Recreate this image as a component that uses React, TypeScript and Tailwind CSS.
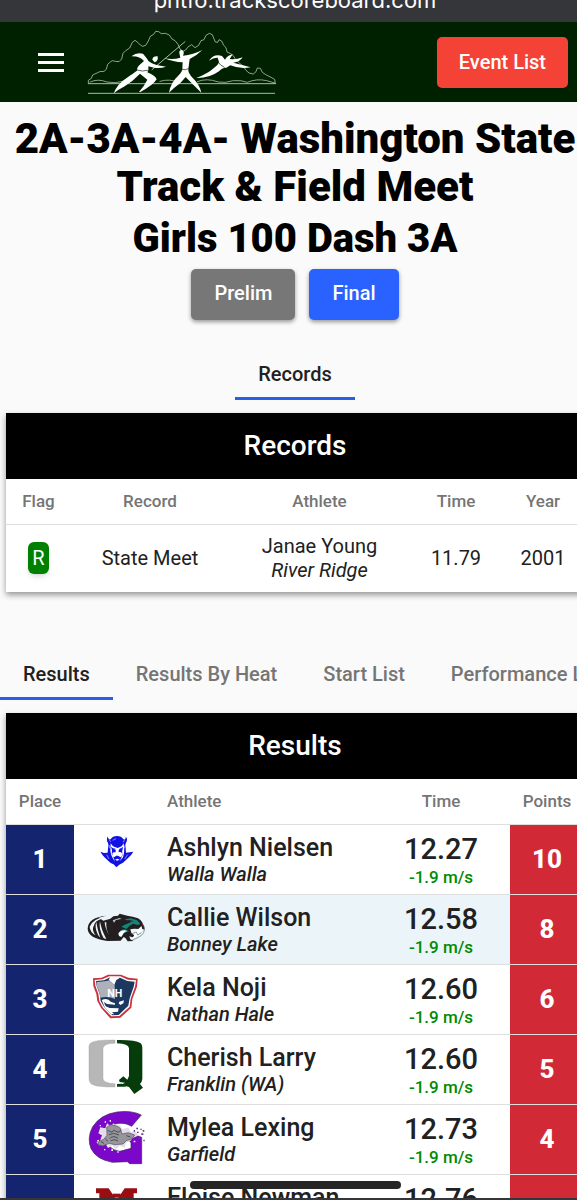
import type { ReactNode } from "react";

function MeetLogo() {
  return (
    <svg viewBox="261 84 570 198" className="h-[66px] w-[190px]" role="img" aria-label="Meet logo" fill="none" strokeLinejoin="round" strokeLinecap="round">
      <g stroke="#c3d2bd" strokeWidth="2.2">
        <path d="M265 246 L265 238 L274 232 L278 222 L291 216 L299 212 L312 211 L319 205 L323 190 L331 183 L337 179 L346 181 L357 182 L365 174 L369 157 L377 149 L389 141 L397 124 L405 118 L413 124 L421 132 L428 136 L437 133 L445 120 L451 106 L461 100 L467 91 L476 92 L484 98 L496 97 L508 102 L516 114 L525 119 L534 130 L540 144 L549 151 L557 147 L565 137 L575 131 L585 140 L596 133 L603 119 L612 116 L618 103 L628 97 L637 101 L641 111 L646 123 L653 124 L657 116 L665 120 L671 133 L678 140 L681 153 L692 158 L700 164 L707 176 L719 187 L730 196 L738 208 L747 216 L760 219 L768 212 L772 201 L781 202 L787 214 L799 222 L813 229 L824 235 L826 248" />
        <path d="M265 248 H826 M265 277 H824" strokeWidth="2.6" />
        <path d="M270 243 Q295 232 320 243 Q345 248 370 241 M480 241 Q508 232 535 244 M592 242 Q620 230 655 243 Q675 247 700 239 Q725 237 742 244 Q770 232 800 239 L824 246" />
        <path d="M555 122 L456 206" strokeWidth="2.6" />
      </g>
      <g fill="#fff">
        <path d="M394 166 Q410 153 429 158 Q439 169 446 181 Q463 194 498 197 Q481 203 462 200 L445 196 Q447 207 442 214 Q467 225 470 235 Q460 252 421 273 L417 273 Q433 255 442 236 L420 218 Q399 240 374 256 Q353 267 341 277 Q352 248 381 230 Q401 216 411 209 Q410 199 421 190 L432 180 Q420 165 394 166Z" />
        <path d="M457 176 Q458 165 473 166 Q475 181 464 184Z" />
        <path d="M538 156 Q537 147 545 147 Q552 149 551 158 L549 164 Q580 161 607 147 Q590 164 569 174 L565 204 Q563 215 579 232 Q598 250 604 275 Q575 247 557 228 Q544 246 522 261 L507 275 Q512 245 536 223 Q547 211 547 203 L548 184 Q520 183 491 171 Q518 177 541 170Z" />
        <path d="M627 179 Q642 157 666 165 L675 176 Q683 163 698 160 L689 174 Q707 177 728 169 Q719 183 700 185 L752 199 Q720 205 691 193 L679 200 Q664 201 657 211 Q628 232 589 231 Q625 216 639 203 Q655 192 657 183 L653 170 Q641 169 627 179Z" />
      </g>
      <path stroke="#002100" strokeWidth="2" d="M411 207 Q427 213 443 208 M547 205 Q556 209 565 203 M655 184 Q661 194 673 199" />
    </svg>
  );
}

function DevilLogo() {
  return (
    <svg viewBox="21 3 180 180" className="size-[60px]" role="img" aria-label="Walla Walla">
      <path fill="#1111e2" d="M83 31 Q78 42 84 51 Q87 57 84 68 L83 80 L72 81 L61 77 Q67 88 75 95 L91 110 Q103 114 109 124 Q119 113 129 110 L145 95 Q154 88 160 77 L138 80 L137 67 Q134 56 138 50 Q144 41 138 32 Q137 41 130 40 Q124 30 111 30 Q98 30 92 40 Q83 39 83 31Z" />
      <path fill="#fff" d="M92 52 L91 74 Q93 92 105 106 L100 94 Q93 83 96 73 L93 62 L107 73 L107 79 Q99 77 97 82 Q96 91 102 94 L109 89 H114 L122 94 Q129 89 126 81 Q121 77 116 79 L116 73 L130 62 Q124 77 128 87 L119 106 L129 94 Q135 78 131 52 L125 61 L113 66 L99 61Z" />
      <path fill="#1111e2" d="M98 66 L106 68 L106 73Z M117 69 L126 65 L119 73Z" />
      <path fill="#fff" d="M105 101 L112 98 L119 101 L112 104Z" />
      <path stroke="#fff" strokeWidth="1.5" fill="none" d="M86 37 L92 48 M135 37 L130 49 M87 57 L89 67 M135 58 L133 67 M80 86 L87 99 M143 86 L134 99 M98 43 L108 38" />
    </svg>
  );
}

function PantherLogo() {
  return (
    <svg viewBox="21 213 180 180" className="size-[60px]" role="img" aria-label="Bonney Lake">
      <path fill="#231f20" d="M80 269 Q24 274 23 308 Q24 337 83 345 L122 344 L131 333 L136 336 L143 346 L161 345 L151 340 L148 331 Q157 336 166 331 L154 321 L151 310 L163 308 L175 309 L184 300 L187 309 L194 311 Q190 285 174 277 L158 272 L142 269 L119 263 L114 269 L100 271 L91 278 L70 284 L57 275Z" />
      <path fill="#edf4f8" d="M80 269 Q37 279 29 302 Q30 319 47 328 Q34 313 41 300 Q46 284 62 280Z M49 288 Q43 304 54 327 L61 335 Q51 306 49 288Z M60 286 Q55 308 71 337 L79 339 Q63 309 60 286Z M74 289 Q75 306 87 327 Q77 308 79 289Z" />
      <path fill="#168479" d="M134 280 L153 277 L171 283 L181 293 L174 297 L159 293 L148 300 L139 309 L124 302 L134 296 L153 289Z M120 313 L134 310 L147 315 L134 321Z" />
      <path fill="#fff" d="M115 322 Q123 310 141 314 L132 320 L124 333 L117 330Z M166 315 L185 304 L183 321 L165 333 L154 340 L162 329Z" />
      <path fill="#b9c4c6" d="M98 283 L118 276 L126 279 L108 282 L102 290Z" />
      <path fill="#231f20" d="M119 279 L134 285 L148 282 L162 286 L149 287 L132 294 L117 291Z" />
      <path stroke="#58696a" strokeWidth="2" fill="none" d="M192 300 Q198 323 175 334 L156 343 M157 323 L169 318 L173 327 L184 320" />
      <path stroke="#a33939" strokeWidth="2" d="M187 294 L190 300" />
    </svg>
  );
}

function RaiderLogo() {
  return (
    <svg viewBox="21 3 180 180" className="size-[60px]" role="img" aria-label="Nathan Hale">
      <path fill="#c9333c" d="M39 37 L65 35 L84 26 H123 L145 35 L173 38 L171 62 L157 99 L154 125 L121 155 L91 157 L64 127 L52 105 L49 84 L40 60Z" />
      <path fill="#fff" d="M44 42 L67 40 L88 31 H121 L144 41 L168 43 L165 62 L152 98 L149 122 L118 150 L94 151 L69 125 L58 105 L55 83 L46 59Z" />
      <path fill="#1c3760" d="M48 45 L72 43 L91 34 L86 41 L103 57 L108 43 L105 36 L120 35 L142 45 L164 47 L161 62 L149 97 L145 119 L116 147 L97 148 L73 124 L62 105 L59 84 L50 60Z" />
      <path fill="#aeb0ba" d="M50 48 L74 46 L90 43 L104 58 L105 99 Q87 90 61 95 L57 75 L50 60Z" />
      <path fill="#fff" d="M92 34 L105 33 L120 35 L108 43 L104 52 L91 44Z M65 102 Q83 94 92 107 L105 112 L105 116 L81 114 L71 108 L77 121 L89 126 L116 127 L114 137 L96 139 L103 145 L93 144 L74 124Z M118 107 L132 103 L130 112 L121 117 L116 112Z" />
      <text x="82" y="93" fill="#fff" className="font-['Roboto'] text-[32px] font-bold">NH</text>
    </svg>
  );
}

function QuakerLogo() {
  return (
    <svg viewBox="21 213 180 180" className="size-[60px]" role="img" aria-label="Franklin">
      <path fill="#b7b7b7" stroke="#9a9a9a" strokeWidth="1" d="M105 222 Q45 221 32 231 Q25 236 27 252 V333 Q26 353 40 357 Q56 363 105 363 V353 Q72 352 69 339 V246 Q72 232 105 232Z" />
      <path fill="#063c0b" d="M111 222 Q166 221 181 231 Q188 235 187 252 V338 Q186 348 180 354 L189 365 L163 384 L147 363 L124 356 L135 350 L119 348 L117 342 L130 331 L142 341 L147 330 V247 Q146 233 111 232Z" />
      <path fill="#063c0b" d="M111 354 L126 353 L140 362 H111Z" />
    </svg>
  );
}

function BulldogLogo() {
  return (
    <svg viewBox="21 18 180 180" className="size-[60px]" role="img" aria-label="Garfield">
      <path fill="#7b08c8" stroke="#3e225d" strokeWidth="2" d="M184 42 Q154 27 111 33 Q62 40 38 77 Q20 110 33 143 Q49 175 97 184 L142 182 L149 188 H185 V109 L155 98 L139 111 L153 125 V142 L119 151 Q81 145 77 108 Q79 80 105 69 Q133 62 155 76Z" />
      <path fill="#e4dce9" d="M61 79 L76 82 L81 67 L91 75 L101 67 L108 75 L120 72 L127 84 L145 80 L154 94 L168 91 L174 104 L158 111 L150 121 L138 126 L134 140 L119 134 L108 145 L97 134 L84 141 L77 129 L57 133 L49 123 L60 119 L66 103 L55 97Z" />
      <path fill="#96959c" stroke="#50505a" strokeWidth="2" d="M80 79 L92 71 L111 75 L121 82 L126 99 L145 95 L164 102 L155 114 L139 119 L129 129 L104 131 L88 127 L67 135 L55 131 L55 122 L71 115 L81 103Z" />
      <path stroke="#3e3e48" strokeWidth="2.5" fill="none" d="M83 88 L94 93 L103 88 L114 94 L123 88 M87 101 L101 97 L117 102 M89 112 Q101 102 114 112 M92 119 L104 116 L114 120 M63 122 L72 127 M139 104 L151 108 M76 114 L84 121" />
      <path fill="#fff" d="M74 61h4v4h-4z M59 72h4v4h-4z M89 57h4v5h-4z M128 74h4v4h-4z M52 117h5v4h-5z M72 144h4v4h-4z M94 145h5v5h-5z M112 151h4v4h-4z M127 143h5v4h-5z M146 134h4v4h-4z M161 119h5v5h-5z M179 100h4v4h-4z M61 96h4v4h-4z M81 132h4v4h-4z" />
      <path fill="#693387" d="M169 80h5v5h-5z M181 83h4v4h-4z M188 87h5v5h-5z M171 92h5v4h-5z M184 97h6v5h-6z M175 109h5v5h-5z M190 116h4v5h-4z M161 87h4v5h-4z" />
    </svg>
  );
}

function BlockMLogo() {
  return (
    <svg viewBox="21 228 180 180" className="size-[60px]" role="img" aria-label="School logo">
      <path fill="#980e12" d="M48 262 H86 L110 298 L134 262 H171 V277 H161 V338 H171 V354 H129 V338 H137 V292 L110 331 L83 292 V338 H91 V354 H48 V338 H58 V277 H48Z" />
      <path fill="#980e12" d="M98 278 H122 V290 H98Z" />
    </svg>
  );
}

type Result = {
  place: number;
  name: string;
  school: string;
  time: string;
  points: number;
  logo: ReactNode;
};

const results: Result[] = [
  { place: 1, name: "Ashlyn Nielsen", school: "Walla Walla", time: "12.27", points: 10, logo: <DevilLogo /> },
  { place: 2, name: "Callie Wilson", school: "Bonney Lake", time: "12.58", points: 8, logo: <PantherLogo /> },
  { place: 3, name: "Kela Noji", school: "Nathan Hale", time: "12.60", points: 6, logo: <RaiderLogo /> },
  { place: 4, name: "Cherish Larry", school: "Franklin (WA)", time: "12.60", points: 5, logo: <QuakerLogo /> },
  { place: 5, name: "Mylea Lexing", school: "Garfield", time: "12.73", points: 4, logo: <BulldogLogo /> },
  { place: 6, name: "Eloise Newman", school: "", time: "12.76", points: 3, logo: <BlockMLogo /> },
];

const tabs = ["Results", "Results By Heat", "Start List", "Performance List"];

function RecordsTable() {
  return (
    <section className="mx-[6px] bg-white shadow-[0_3px_6px_rgba(0,0,0,0.4)]">
      <h2 className="bg-black text-center text-[28px] leading-[66px] font-medium text-white">Records</h2>
      <table className="w-full table-fixed border-collapse text-center">
        <colgroup>
          <col className="w-[65px]" />
          <col className="w-[158px]" />
          <col />
          <col className="w-[92px]" />
          <col className="w-[82px]" />
        </colgroup>
        <thead>
          <tr className="h-[45px] border-b border-[#dedede] text-[17px] text-[#757575]">
            {["Flag", "Record", "Athlete", "Time", "Year"].map((label) => (
              <th key={label} className="font-medium">{label}</th>
            ))}
          </tr>
        </thead>
        <tbody>
          <tr className="h-[68px] text-[20px] leading-6 text-[#212121]">
            <td>
              <span className="inline-block rounded-[6px] bg-[#008000] px-1 leading-8 text-white shadow-md">R</span>
            </td>
            <td>State Meet</td>
            <td>
              Janae Young
              <br />
              <i>River Ridge</i>
            </td>
            <td>11.79</td>
            <td>2001</td>
          </tr>
        </tbody>
      </table>
    </section>
  );
}

function ResultsTable() {
  return (
    <section className="mx-[6px] bg-white shadow-[0_3px_6px_rgba(0,0,0,0.4)]">
      <h2 className="bg-black text-center text-[28px] leading-[66px] font-medium text-white">Results</h2>
      <table className="w-full table-fixed border-collapse">
        <colgroup>
          <col className="w-[68px]" />
          <col className="w-[86px]" />
          <col />
          <col className="w-[138px]" />
          <col className="w-[74px]" />
        </colgroup>
        <thead>
          <tr className="h-[45px] border-b border-[#dedede] text-[17px] text-[#757575]">
            <th className="font-medium">Place</th>
            <th aria-label="School logo" />
            <th className="pl-[7px] text-left font-medium">Athlete</th>
            <th className="font-medium">Time</th>
            <th className="font-medium">Points</th>
          </tr>
        </thead>
        <tbody>
          {results.map((r) => (
            <tr key={r.place} className="h-[70px] border-b border-[#dedede] text-[#212121] nth-2:bg-[#ebf4f8]">
              <td className="bg-[#14246f] text-center text-[26px] font-extrabold text-white">{r.place}</td>
              <td className="pt-[2px] pl-[13px] align-top">{r.logo}</td>
              <td className="pt-[9px] pl-[7px] align-top font-medium whitespace-nowrap">
                <div className="text-[25px] leading-7">{r.name}</div>
                <div className="text-[20px] leading-6 italic">{r.school}</div>
              </td>
              <td className="pt-2 text-center align-top font-medium">
                <div className="text-[29px] leading-8">{r.time}</div>
                <div className="text-[17px] leading-6 text-[#008a00]">-1.9 m/s</div>
              </td>
              <td className="bg-[#d12a36] text-center text-[26px] font-extrabold text-white">{r.points}</td>
            </tr>
          ))}
        </tbody>
      </table>
    </section>
  );
}

export default function App() {
  return (
    <div className="relative h-screen overflow-hidden bg-[#fafafa] font-['Roboto',sans-serif]">
      <div className="flex h-[22px] w-[calc(100%+13px)] items-end justify-center overflow-hidden bg-[#35363a] pb-2 font-['Inter',sans-serif] text-[22px] leading-7 text-white">
        phtfo.trackscoreboard.com
      </div>
      <header className="flex h-20 items-center bg-[#002100] pr-[9px] pl-[38px]">
        <button type="button" aria-label="Menu" className="flex flex-col gap-[5px]">
          <span className="h-[3px] w-[26px] bg-white" />
          <span className="h-[3px] w-[26px] bg-white" />
          <span className="h-[3px] w-[26px] bg-white" />
        </button>
        <a href="#home" className="ml-[23px]">
          <MeetLogo />
        </a>
        <button type="button" className="ml-auto h-[51px] rounded-[5px] bg-[#f44336] px-[22px] text-[20px] font-medium text-white">
          Event List
        </button>
      </header>

      <main className="w-[calc(100%+13px)] pt-[13px]">
        <h1 className="text-center text-[42px] leading-[48px] font-black whitespace-nowrap text-black">
          2A-3A-4A- Washington State
          <br />
          Track &amp; Field Meet
        </h1>
        <h2 className="mt-1 text-center text-[40px] leading-[48px] font-black text-black">Girls 100 Dash 3A</h2>
        <div className="mt-[6px] flex justify-center gap-[14px] text-[20px] font-medium text-white">
          <button type="button" className="h-[51px] rounded-[5px] bg-[#777777] px-[23px] pb-[3px] shadow-[0_2px_4px_rgba(0,0,0,0.4)]">Prelim</button>
          <button type="button" className="h-[51px] rounded-[5px] bg-[#2962ff] px-[23px] pb-[3px] shadow-[0_2px_4px_rgba(0,0,0,0.4)]">Final</button>
        </div>

        <div role="tablist" className="mt-[29px] flex justify-center">
          <button type="button" role="tab" aria-selected="true" className="h-[51px] border-b-3 border-[#2c5de5] px-[23px] pt-[2px] text-[20px] font-medium text-[#212121]">
            Records
          </button>
        </div>
        <div className="mt-[13px]">
          <RecordsTable />
        </div>

        <div role="tablist" className="mt-[57px] flex text-[20px] font-medium whitespace-nowrap">
          {tabs.map((tab, i) => (
            <button
              key={tab}
              type="button"
              role="tab"
              aria-selected={i === 0}
              className="h-[51px] shrink-0 border-b-3 border-transparent px-[23px] pt-[2px] text-[#757575] aria-selected:border-[#2c5de5] aria-selected:text-[#212121]"
            >
              {tab}
            </button>
          ))}
        </div>
        <div className="mt-[13px]">
          <ResultsTable />
        </div>
      </main>

      <div className="absolute bottom-0 left-0 flex w-[calc(100%+13px)] flex-col items-center gap-[9px]">
        <div className="h-2 w-[211px] rounded-full bg-[#252525]" />
        <div className="h-[2px] w-full bg-[#35363a]" />
      </div>
    </div>
  );
}
